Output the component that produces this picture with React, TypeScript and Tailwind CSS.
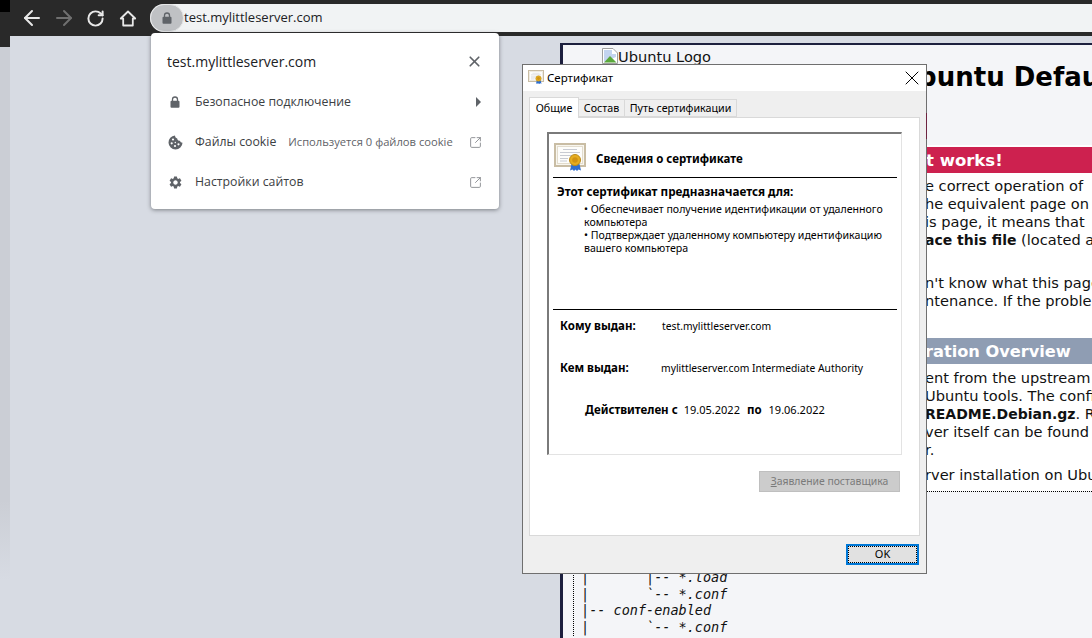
import React from "react";
import { X, SquareArrowOutUpRight, ArrowLeft, ArrowRight, RotateCw } from "lucide-react";
import { MdSettings } from "react-icons/md";

function CertIcon({ small }: { small?: boolean }) {
  const s = small ? 16 : 32;
  return (
    <svg width={s} height={s} viewBox="0 0 32 32" className="shrink-0">
      <rect x="1" y="1" width="30" height="22" fill="#f8f6ef" stroke="#c9bda4" strokeWidth="2" />
      <rect x="3.500" y="3.500" width="25" height="17" fill="#fdfdfb" stroke="#e2dccd" />
      <path d="M9 6.500h14M6 9.500h20M6 12.500h12M6 15.500h8M6 18h7" stroke="#c8cbd2" strokeWidth="1" />
      <path d="M17.500 21l-1.500 6.500 2.500-1 1.500 1.500 1.500-1.500 1.500 1.500 1.500-1.500 2.500 1-1.500-6.500z" fill="#2f6fd0" />
      <circle cx="21" cy="17" r="5.500" fill="#e6ad1f" stroke="#bb8a17" />
      <circle cx="21" cy="17" r="2.800" fill="#d09313" />
    </svg>
  );
}

function BrokenImage() {
  return (
    <svg width="16" height="16" viewBox="0 0 16 16" className="shrink-0">
      <path d="M0.500 0.500H11L15.500 5V15.500H0.500Z" fill="#fff" stroke="#a0a0a0" />
      <path d="M2 2H10V6H14V9L2 14Z" fill="#c3d4f0" />
      <path d="M2 14.500L8 8L14.500 14.500Z" fill="#5aa83c" />
    </svg>
  );
}

function Padlock({ className }: { className?: string }) {
  return (
    <svg width="10" height="12" viewBox="0 0 10 12" className={className}>
      <path d="M2.500 5V3.500a2.500 2.500 0 0 1 5 0V5" fill="none" stroke="#5f6368" strokeWidth="1.300" />
      <rect x="0.500" y="4.800" width="9" height="7" rx="1" fill="#5f6368" />
    </svg>
  );
}

function CookieIcon() {
  return (
    <svg width="15" height="15" viewBox="0 0 15 15" className="shrink-0">
      <path d="M7 0.500a7 7 0 1 0 7.500 7.200c-1.300 0-2.300-.7-2.500-1.900-1.400.1-2.700-.9-2.800-2.400C7.900 3.200 7 2 7 0.500z" fill="#5f6368" />
      <circle cx="5" cy="4.500" r="1.100" fill="#fff" />
      <circle cx="3.700" cy="8.300" r="1.100" fill="#fff" />
      <circle cx="7" cy="11" r="1.100" fill="#fff" />
      <circle cx="10.500" cy="9.300" r="1.100" fill="#fff" />
      <circle cx="7.300" cy="7.500" r="0.700" fill="#fff" />
    </svg>
  );
}

function PopupRow({ icon, label, note, trailing }: { icon: React.ReactNode; label: string; note?: string; trailing: React.ReactNode }) {
  return (
    <div className="flex h-10 items-center whitespace-nowrap pl-[17px] pr-[17px]">
      <div className="flex w-[27px] shrink-0 items-center">{icon}</div>
      <span className="text-[12.300px] text-[#3c4043]">{label}</span>
      {note && <span className="ml-[12px] text-[11.200px] text-[#5f6368]">{note}</span>}
      <span className="ml-auto flex items-center">{trailing}</span>
    </div>
  );
}

/* A line of the page behind the dialog: `hidden` runs under the dialog, `shown` starts at its right edge. */
function Line({ hidden, children }: { hidden: string; children: React.ReactNode }) {
  return (
    <div className="flex h-[18px] whitespace-nowrap">
      <span className="flex w-[362px] shrink-0 justify-end overflow-hidden">{hidden}</span>
      <span>{children}</span>
    </div>
  );
}

export default function App() {
  return (
    <div className="relative flex h-[638px] w-[1092px] overflow-hidden bg-[#d7dbe3] font-['Open_Sans',sans-serif]">
      {/* window edge on the left */}
      <aside className="flex w-[10px] shrink-0 flex-col">
        <div className="h-[12px] bg-black" />
        <div className="h-[35px] bg-[#292929]" />
        <div className="h-[533px] bg-gradient-to-b from-[#cbced5] from-85% to-[#d7dbe3]" />
      </aside>

      <div className="flex min-w-0 flex-1 flex-col">
        {/* browser toolbar */}
        <header className="flex h-[36px] shrink-0 items-start bg-[#292929]">
          <div className="flex h-[36px] w-[140px] shrink-0 items-center text-[#e8e8e8]">
            <ArrowLeft size={24} strokeWidth={2} className="ml-[10px]" />
            <ArrowRight size={24} strokeWidth={2} className="ml-[8px] text-[#6f6f6f]" />
            <RotateCw size={19} strokeWidth={2.500} className="ml-[10px]" />
            <svg width="18" height="17" viewBox="0 0 18 17" className="ml-[14px]">
              <path d="M9 1.500L1.800 8.500H4.200V15.500H13.800V8.500H16.200Z" fill="none" stroke="#e8e8e8" strokeWidth="1.800" strokeLinejoin="round" />
            </svg>
          </div>
          <div className="mt-[4px] flex h-[28px] flex-1 items-center rounded-l-[14px] bg-[#f1f3f4] text-[#202124]">
            <div className="flex h-[28px] w-[34px] items-center justify-center rounded-full border border-[#e6e7e8] bg-[#bfc1c4]">
              <Padlock />
            </div>
            <span className="text-[13px]">test.mylittleserver.com</span>
          </div>
        </header>

        {/* page area */}
        <main className="flex min-h-0 flex-1">
          <div className="ml-[550px] mt-[7px] min-w-[532px] flex-1 overflow-hidden border-l-[3px] border-t-[2px] border-[#1c1f3e] bg-[#f4f5f8] pt-[3px] font-['DejaVu_Sans',sans-serif] text-[14.600px] leading-[18px] text-[#111]">
            <div className="flex h-[14px] items-start pl-[39px]">
              <BrokenImage />
              <span className="leading-[18px]">Ubuntu Logo</span>
            </div>
            <div className="whitespace-nowrap pl-[199px] text-[26px] font-bold leading-[30px] text-black">Apache2 Ubuntu Default Page</div>
            <div className="mt-[53px] h-[2px] bg-white" />
            <div className="flex h-[26px] whitespace-nowrap bg-[#cd214f] text-[16.500px] font-bold leading-[27px] text-white">
              <span className="flex w-[363px] shrink-0 justify-end overflow-hidden">I</span>
              <span>t works!</span>
            </div>
            <div className="bg-white pb-[7px] pt-[4px]">
              <Line hidden="This is the default welcome page used to test th">e correct operation of</Line>
              <Line hidden="after installation on Ubuntu systems. It is based on t">he equivalent page on</Line>
              <Line hidden="is derived. If you can read th">is page, it means that</Line>
              <Line hidden="at this site is working properly. You should "><b className="text-[14px]">ace this file</b> (located at /var/www)</Line>
              <div className="h-[25px]" />
              <Line hidden="If you are a normal user of this web site and do">n't know what this page is about</Line>
              <Line hidden="currently unavailable due to mai">ntenance. If the problem persists</Line>
              <div className="h-[28px]" />
              <div className="flex h-[26px] whitespace-nowrap bg-[#8f9db3] text-[16.200px] font-bold leading-[27px] text-white">
                <span className="flex w-[362px] shrink-0 justify-end overflow-hidden">Configu</span>
                <span>ration Overview</span>
              </div>
              <div className="pt-[5px]">
                <Line hidden="Ubuntu's Apache2 default configuration is differ">ent from the upstream</Line>
                <Line hidden="into several files optimized for interaction with ">Ubuntu tools. The configuration</Line>
                <Line hidden="documented in /usr/share/doc/apache2/"><b className="text-[14px]">README.Debian.gz</b>. Refer to this</Line>
                <Line hidden="Documentation for the web ser">ver itself can be found</Line>
                <Line hidden="apache2-doc package was installed on this serve">r.</Line>
              </div>
              <div className="pt-[7px]">
                <Line hidden="The configuration layout for an Apache2 web se">rver installation on Ubuntu systems</Line>
              </div>
            </div>
            <div className="border-t border-dotted border-black" />
            <pre className="ml-[10px] mt-[64px] border-l border-dotted border-black pl-[7px] pt-[13px] font-['DejaVu_Sans_Mono',monospace] text-[13.500px] italic leading-[16.700px] text-[#111]">{`|       |-- *.load
|       \`-- *.conf
|-- conf-enabled
|       \`-- *.conf`}</pre>
          </div>
        </main>
      </div>

      {/* site info popup */}
      <div className="absolute left-[151px] top-[33px] h-[176px] w-[348px] rounded-[4px] bg-white shadow-[0_1px_4px_rgba(60,64,67,0.6)]">
        <div className="flex h-[49px] items-center pl-[16px] pr-[16px] pt-[8px]">
          <span className="text-[14px] text-[#202124]">test.mylittleserver.com</span>
          <X size={17} strokeWidth={2.400} className="ml-auto text-[#5f6368]" />
        </div>
        <PopupRow
          icon={<Padlock className="ml-[2px]" />}
          label="Безопасное подключение"
          trailing={<svg width="8" height="10" viewBox="0 0 8 10"><path d="M2 0l5 5-5 5z" fill="#5f6368" /></svg>}
        />
        <PopupRow
          icon={<CookieIcon />}
          label="Файлы cookie"
          note="Используется 0 файлов cookie"
          trailing={<SquareArrowOutUpRight size={13} strokeWidth={1.700} className="text-[#8a8d91]" />}
        />
        <PopupRow
          icon={<MdSettings size={15} color="#5f6368" />}
          label="Настройки сайтов"
          trailing={<SquareArrowOutUpRight size={13} strokeWidth={1.700} className="text-[#8a8d91]" />}
        />
      </div>

      {/* certificate dialog */}
      <div className="absolute left-[522px] top-[64px] flex h-[510px] w-[405px] flex-col border border-[#6f6f6f] bg-[#efefef] font-['Noto_Sans',sans-serif] text-black">
        <div className="flex h-[26px] shrink-0 items-center bg-white pl-[5px] pr-[2px]">
          <CertIcon small />
          <span className="ml-[3px] text-[11.500px]">Сертификат</span>
          <X size={24} strokeWidth={1} className="ml-auto" />
        </div>
        <div className="flex h-[26px] shrink-0 items-end pl-[6px] text-[10.700px]">
          <div className="z-10 -mb-[1px] flex h-[21px] w-[50px] items-center justify-center border border-b-0 border-[#d9d9d9] bg-white">Общие</div>
          <div className="flex h-[18px] w-[46px] items-center justify-center border border-l-0 border-[#d9d9d9]">Состав</div>
          <div className="flex h-[18px] w-[112px] items-center justify-center border border-l-0 border-[#d9d9d9]">Путь сертификации</div>
        </div>
        <div className="mx-[6px] h-[419px] shrink-0 border border-[#d9d9d9] bg-white pl-[17px] pt-[14px]">
          <div className="flex h-[323px] w-[355px] flex-col border-b border-l-2 border-r border-t-2 border-b-[#e3e3e3] border-l-[#7a7a7a] border-r-[#e3e3e3] border-t-[#7a7a7a]">
            <div className="mx-[4px] flex h-[44px] shrink-0 items-start border-b border-black pl-[1px] pt-[9px]">
              <CertIcon />
              <span className="ml-[10px] mt-[7px] text-[11.500px] font-bold">Сведения о сертификате</span>
            </div>
            <div className="pl-[8px] pt-[5px] text-[11.700px] font-bold leading-[17px]">Этот сертификат предназначается для:</div>
            <div className="whitespace-nowrap pl-[35px] pt-[3px] text-[10.600px] leading-[13px]">
              <div>• Обеспечивает получение идентификации от удаленного</div>
              <div>компьютера</div>
              <div>• Подтверждает удаленному компьютеру идентификацию</div>
              <div>вашего компьютера</div>
            </div>
            <div className="mx-[4px] mt-[54px] border-t border-black" />
            <div className="flex pl-[11px] pt-[8px] text-[10.300px] leading-[16px]">
              <span className="w-[102px] text-[11.500px] font-bold">Кому выдан:</span>
              <span>test.mylittleserver.com</span>
            </div>
            <div className="flex pl-[11px] pt-[26px] text-[10.300px] leading-[16px]">
              <span className="w-[101px] text-[11.500px] font-bold">Кем выдан:</span>
              <span>mylittleserver.com Intermediate Authority</span>
            </div>
            <div className="flex pl-[36px] pt-[26px] text-[11px] leading-[16px]">
              <span className="text-[11.500px] font-bold">Действителен с</span>
              <span className="ml-[6px]">19.05.2022</span>
              <span className="ml-[7px] text-[11.500px] font-bold">по</span>
              <span className="ml-[7px]">19.06.2022</span>
            </div>
          </div>
          <div className="ml-[212px] mt-[16px] flex h-[21px] w-[141px] items-center justify-center border border-[#bfbfbf] bg-[#cccccc] pt-px text-[10.400px] text-[#7a7a7a]">
            <span><span className="underline">З</span>аявление поставщика</span>
          </div>
        </div>
        <div className="flex flex-1 items-start justify-end pr-[7px] pt-[8px]">
          <div className="flex h-[21px] w-[73px] items-center justify-center border-2 border-[#0078d7] bg-[#e1e1e1] text-[11px] outline-1 -outline-offset-3 outline-dotted outline-black">OK</div>
        </div>
      </div>

      {/* tint on the dialog's right edge */}
      <div className="absolute left-[926px] top-[113px] h-[26px] w-px bg-[#6e2440]" />
    </div>
  );
}
